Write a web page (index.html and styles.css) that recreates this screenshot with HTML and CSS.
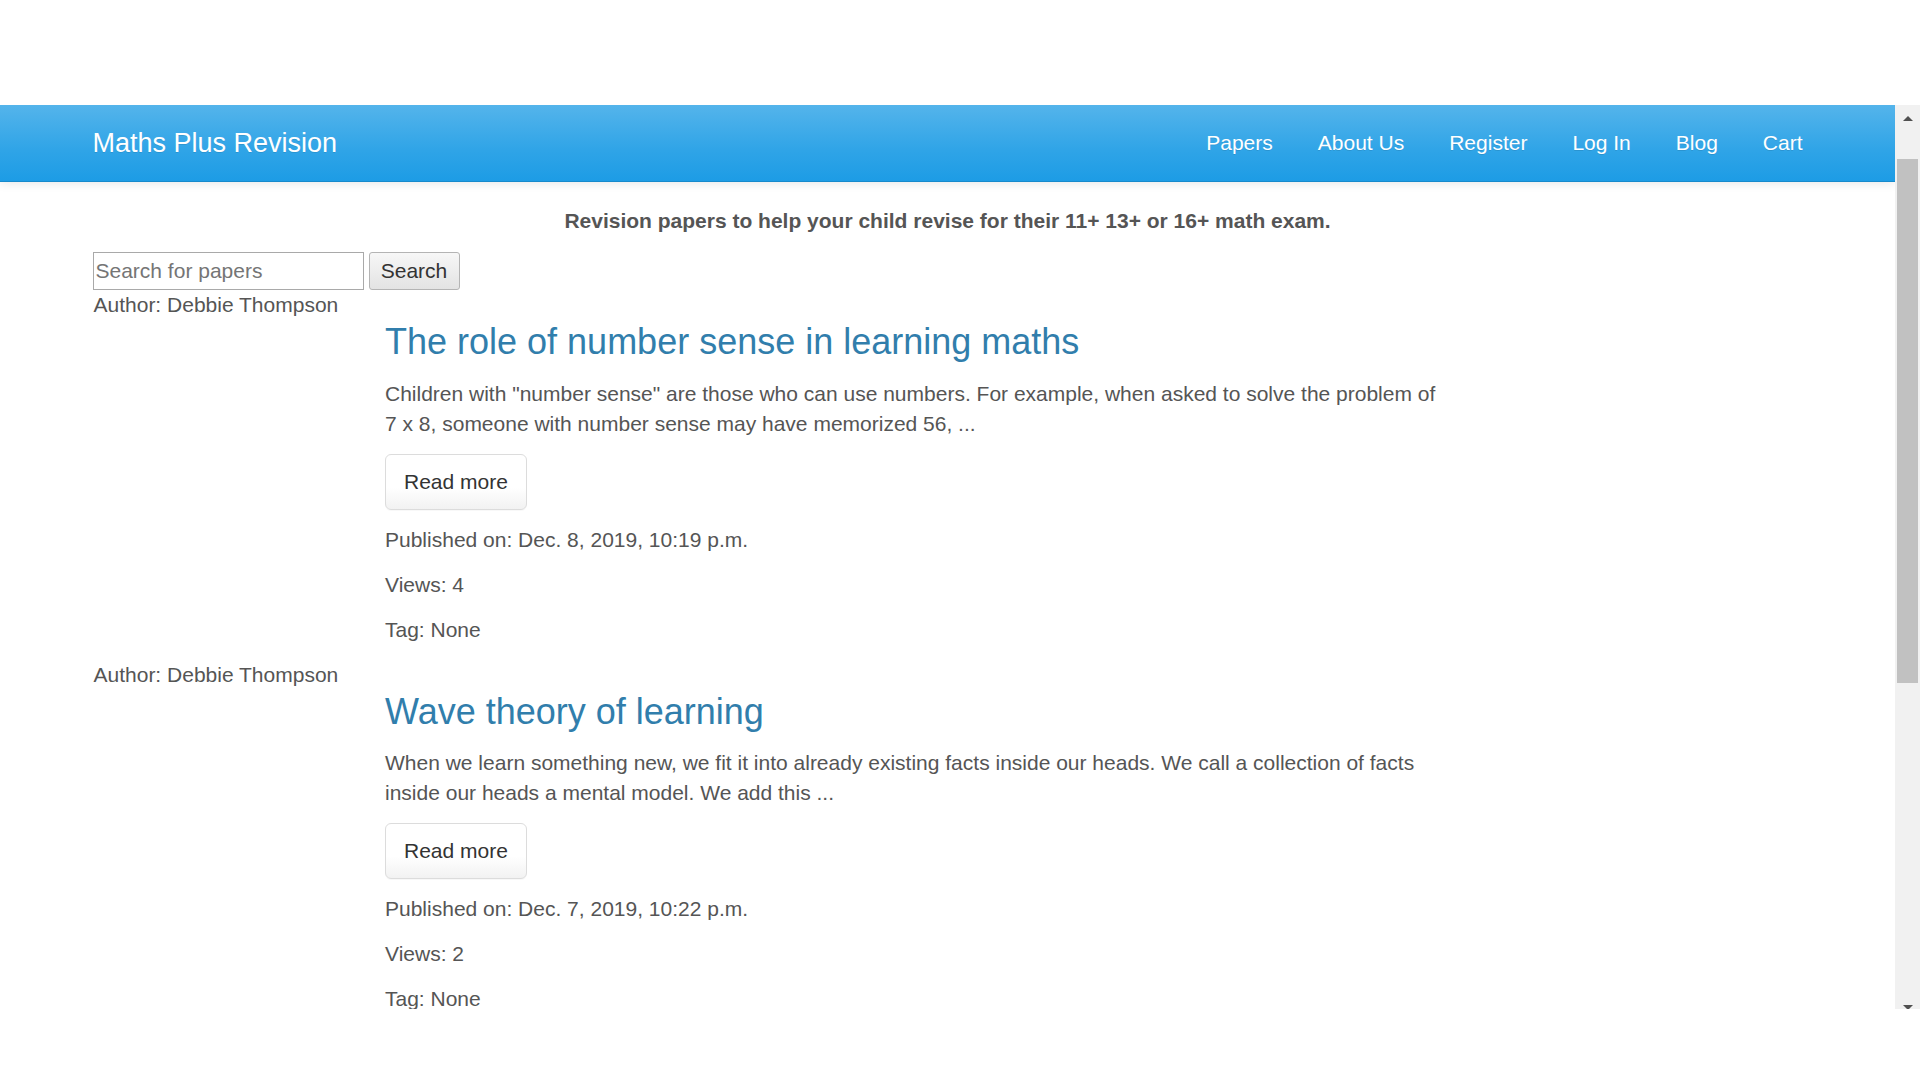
FILE: index.html
```html
<!DOCTYPE html>
<html lang="en">
<head>
<meta charset="utf-8">
<title>Maths Plus Revision</title>
<link rel="stylesheet" href="styles.css">
</head>
<body>
<div class="top-gap"></div>
<div class="viewport">
  <div class="page">
    <nav class="navbar">
      <div class="container nav-inner">
        <a class="brand" href="#">Maths Plus Revision</a>
        <ul class="nav">
          <li><a href="#">Papers</a></li>
          <li><a href="#">About Us</a></li>
          <li><a href="#">Register</a></li>
          <li><a href="#">Log In</a></li>
          <li><a href="#">Blog</a></li>
          <li><a href="#">Cart</a></li>
        </ul>
      </div>
    </nav>
    <main class="container">
      <p class="tagline">Revision papers to help your child revise for their 11+ 13+ or 16+ math exam.</p>
      <form class="search">
        <input class="search-input" type="text" placeholder="Search for papers">
        <button class="search-btn" type="button">Search</button>
      </form>

      <div class="row">
        <div class="author">Author: Debbie Thompson</div>
        <div class="post">
          <h3 class="post-title"><a href="#">The role of number sense in learning maths</a></h3>
          <p>Children with "number sense" are those who can use numbers. For example, when asked to solve the problem of 7 x 8, someone with number sense may have memorized 56, ...</p>
          <div class="more"><a class="btn" href="#">Read more</a></div>
          <p>Published on: Dec. 8, 2019, 10:19 p.m.</p>
          <p>Views: 4</p>
          <p>Tag: None</p>
        </div>
      </div>

      <div class="row">
        <div class="author">Author: Debbie Thompson</div>
        <div class="post">
          <h3 class="post-title"><a href="#">Wave theory of learning</a></h3>
          <p>When we learn something new, we fit it into already existing facts inside our heads. We call a collection of facts inside our heads a mental model. We add this ...</p>
          <div class="more"><a class="btn" href="#">Read more</a></div>
          <p>Published on: Dec. 7, 2019, 10:22 p.m.</p>
          <p>Views: 2</p>
          <p>Tag: None</p>
        </div>
      </div>
    </main>
  </div>
  <div class="scrollbar">
    <div class="sb-btn"><span class="tri-up"></span></div>
    <div class="sb-thumb"></div>
    <div class="sb-fill"></div>
    <div class="sb-btn"><span class="tri-down"></span></div>
  </div>
</div>
</body>
</html>
```

FILE: styles.css
```css
html, body {
  margin: 0;
  padding: 0;
  background: #fff;
  height: 1080px;
  overflow: hidden;
}

body {
  font-family: "Liberation Sans", Arial, Helvetica, sans-serif;
  font-size: 21px;
  line-height: 30px;
  color: #555555;
}

.top-gap {
  height: 105px;
}

.viewport {
  display: flex;
  align-items: flex-start;
  height: 904px;
  overflow: hidden;
}

.page {
  flex: 1;
  min-width: 0;
  height: 904px;
  overflow: hidden;
  background: #fff;
}

.container {
  width: 1755px;
  margin: 0 auto;
  padding: 0 22.5px;
  box-sizing: border-box;
}

/* Navbar */
.navbar {
  position: relative;
  z-index: 2;
  height: 76px;
  border-bottom: 1px solid #178acc;
  background-image: linear-gradient(#54b4eb, #2fa4e7 60%, #1d9ce5);
  box-shadow: 0 1px 10px rgba(0, 0, 0, 0.1);
}

.nav-inner {
  display: flex;
  align-items: center;
  justify-content: space-between;
  height: 76px;
}

.brand {
  margin-left: -22.5px;
  padding: 0 22.5px;
  font-size: 27px;
  line-height: 30px;
  color: #fff;
  text-decoration: none;
  text-shadow: 0 1px 0 rgba(0, 0, 0, 0.1);
}

.nav {
  display: flex;
  list-style: none;
  margin: 0 -22.5px 0 0;
  padding: 0;
}

.nav a {
  display: block;
  padding: 0 22.5px;
  font-size: 21px;
  line-height: 30px;
  color: #fff;
  text-decoration: none;
  text-shadow: 0 1px 0 rgba(0, 0, 0, 0.1);
}

/* Content */
.tagline {
  margin: 24px 0 0;
  text-align: center;
  font-weight: bold;
}

.search {
  display: flex;
  margin: 16px 0 0;
}

.search-input {
  width: 271px;
  height: 38px;
  box-sizing: border-box;
  margin: 0;
  padding: 0 2px;
  border: 1px solid #a9a9a9;
  font-family: "Liberation Sans", Arial, sans-serif;
  font-size: 21px;
  color: #555;
  background: #fff;
}

.search-input::placeholder {
  color: #757575;
}

.search-btn {
  width: 91px;
  height: 38px;
  box-sizing: border-box;
  margin: 0 0 0 5px;
  padding: 0;
  border: 1px solid #b4b4b4;
  border-radius: 3px;
  background: linear-gradient(#f7f7f7, #e3e3e3);
  font-family: "Liberation Sans", Arial, sans-serif;
  font-size: 21px;
  color: #333;
}

.row {
  display: flex;
  margin: 0 -22.5px;
}

.author {
  width: 292.5px;
  padding: 0 22.5px 0 23.5px;
  box-sizing: border-box;
  flex: none;
}

.post {
  width: 1060px;
  padding: 0 22.5px;
  flex: none;
}

.post-title {
  margin: 32px 0 17px;
  font-size: 36px;
  line-height: 39.6px;
  font-weight: normal;
}

.post-title a {
  color: #317eac;
  text-decoration: none;
}

.post p {
  margin: 0 0 15px;
}

.more {
  display: flex;
  margin: 0 0 15px;
}

.btn {
  display: inline-block;
  height: 56px;
  box-sizing: border-box;
  padding: 12px 18px;
  border: 1px solid #dcdcdc;
  border-radius: 6px;
  background-image: linear-gradient(#ffffff, #ffffff 60%, #f2f2f2);
  font-size: 21px;
  line-height: 30px;
  color: #333;
  text-decoration: none;
  box-shadow: 0 1px 1px rgba(0, 0, 0, 0.03);
}

/* Fake scrollbar */
.scrollbar {
  flex: none;
  width: 25px;
  height: 916px;
  background: #f1f1f1;
  display: flex;
  flex-direction: column;
  align-items: center;
}

.sb-btn {
  height: 27px;
  width: 25px;
  display: flex;
  align-items: center;
  justify-content: center;
  flex: none;
}

.tri-up {
  width: 0;
  height: 0;
  border-left: 5.5px solid transparent;
  border-right: 5.5px solid transparent;
  border-bottom: 5.5px solid #505050;
}

.tri-down {
  width: 0;
  height: 0;
  border-left: 5.5px solid transparent;
  border-right: 5.5px solid transparent;
  border-top: 5.5px solid #505050;
}

.sb-thumb {
  margin-top: 27px;
  width: 21px;
  height: 524px;
  background: #c1c1c1;
  flex: none;
}

.sb-fill {
  flex: 1;
}
```
